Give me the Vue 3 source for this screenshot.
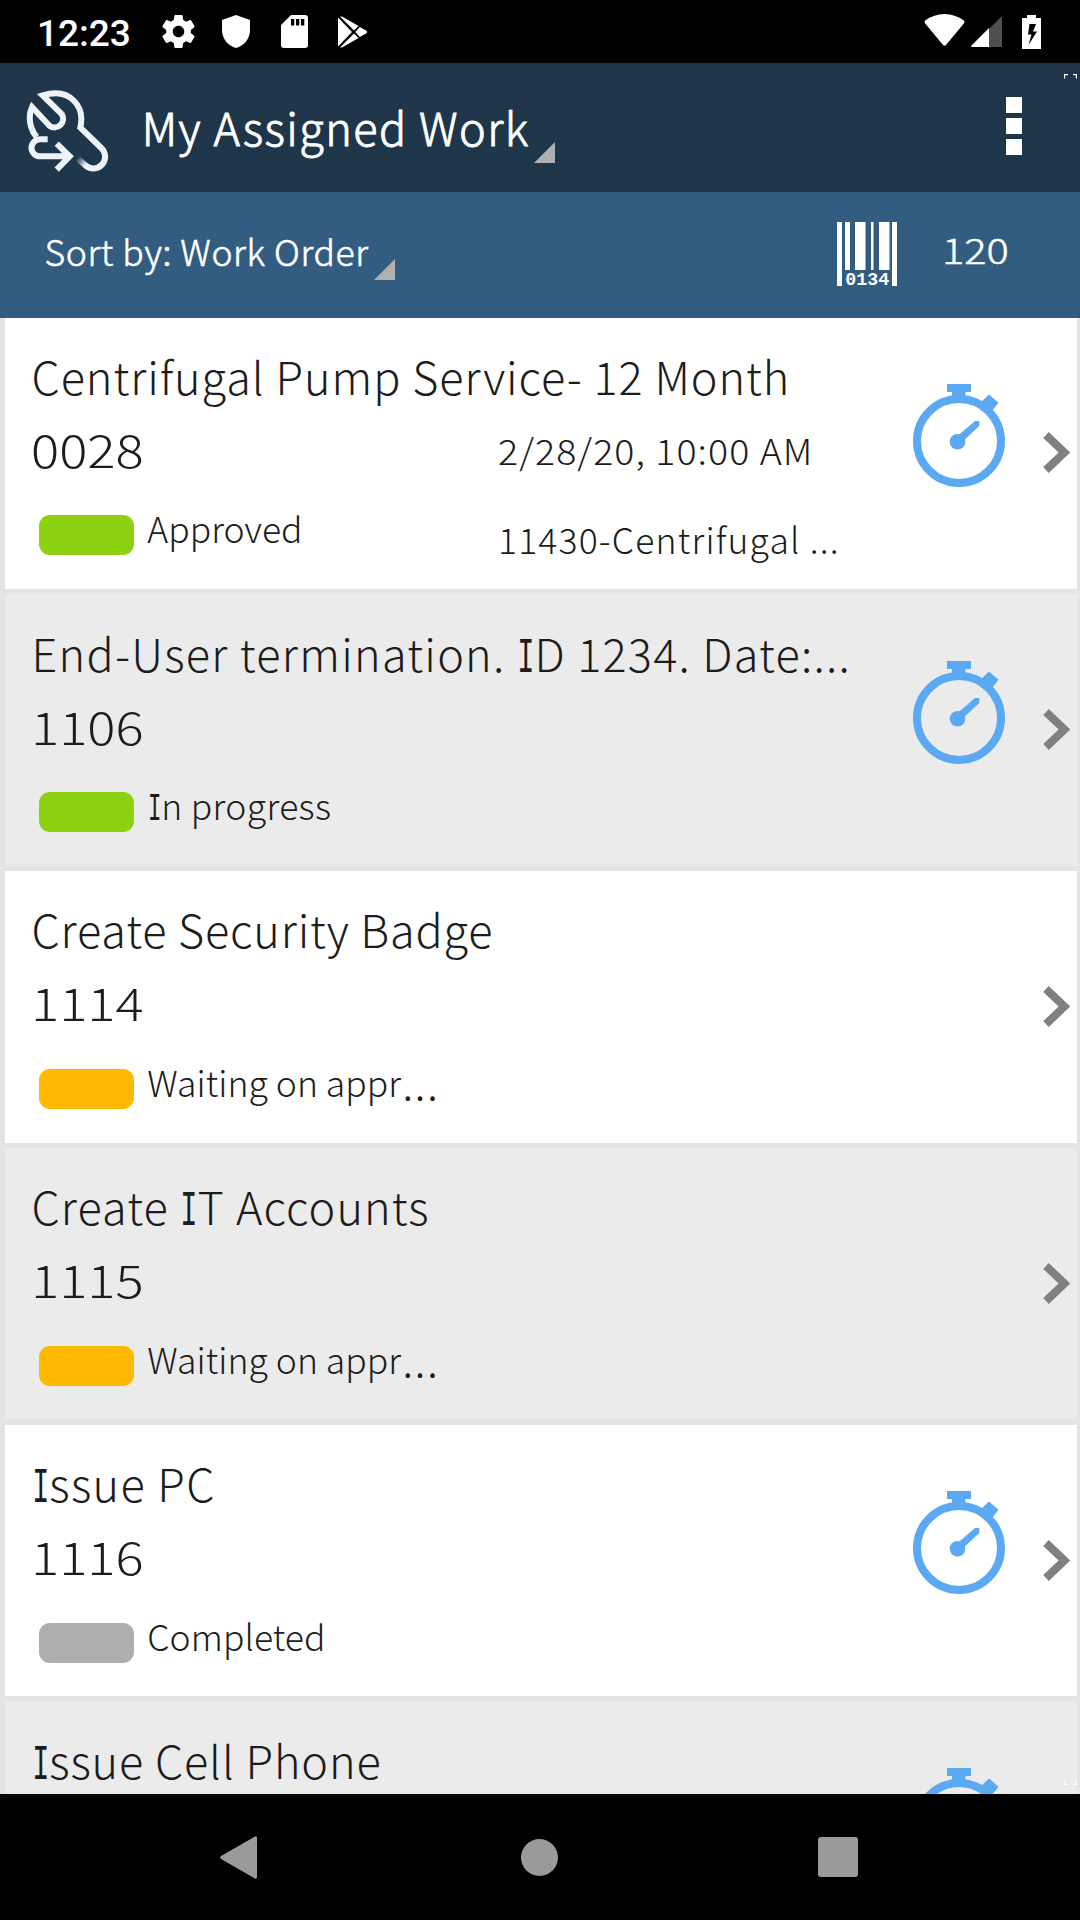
<script setup>
const orders = [
  { title: 'Centrifugal Pump Service- 12 Month', ls: 0.94, id: '0028', status: 'Approved', sls: 0, tone: 'green', timer: true, date: '2/28/20, 10:00 AM', asset: '11430-Centrifugal ...' },
  { title: 'End-User termination. ID 1234. Date:...', ls: 1.26, id: '1106', status: 'In progress', sls: 0.35, tone: 'green', timer: true },
  { title: 'Create Security Badge', ls: 0.83, id: '1114', status: 'Waiting on appr', cut: true, sls: 0.05, tone: 'amber' },
  { title: 'Create IT Accounts', ls: 1.08, id: '1115', status: 'Waiting on appr', cut: true, sls: 0.05, tone: 'amber' },
  { title: 'Issue PC', ls: 1.35, id: '1116', status: 'Completed', sls: 0.05, tone: 'gray', timer: true },
  { title: 'Issue Cell Phone', ls: 0.87, timer: true }
]
// Capital I is set in a slab face, so it is split from the rest of the text.
const parts = (text) => text.split(/(I)/).filter(Boolean)
</script>

<template>
  <div class="screen">
    <div class="status-bar">
      <span class="clock">12:23</span>
      <svg class="gear" viewBox="2 2 20 20"><path fill="#fff" d="M19.43 12.98c.04-.32.07-.64.07-.98s-.03-.66-.07-.98l2.11-1.65c.19-.15.24-.42.12-.64l-2-3.46c-.12-.22-.39-.3-.61-.22l-2.49 1c-.52-.4-1.08-.73-1.69-.98l-.38-2.65C14.46 2.18 14.25 2 14 2h-4c-.25 0-.46.18-.49.42l-.38 2.65c-.61.25-1.17.59-1.69.98l-2.49-1c-.23-.09-.49 0-.61.22l-2 3.46c-.13.22-.07.49.12.64l2.11 1.65c-.04.32-.07.65-.07.98s.03.66.07.98l-2.11 1.65c-.19.15-.24.42-.12.64l2 3.46c.12.22.39.3.61.22l2.49-1c.52.4 1.08.73 1.69.98l.38 2.65c.03.24.24.42.49.42h4c.25 0 .46-.18.49-.42l.38-2.65c.61-.25 1.17-.59 1.69-.98l2.49 1c.23.09.49 0 .61-.22l2-3.46c.12-.22.07-.49-.12-.64l-2.11-1.65zM12 15.5c-1.93 0-3.5-1.57-3.5-3.5s1.57-3.5 3.5-3.5 3.5 1.57 3.5 3.5-1.57 3.5-3.5 3.5z" /></svg>
      <svg class="shield" viewBox="0 0 28 33"><path fill="#fff" d="M14 0L28 5V15C28 24 22 31 14 33C6 31 0 24 0 15V5Z" /></svg>
      <svg class="sd" viewBox="0 0 27 33"><path fill="#fff" fill-rule="evenodd" d="M10 0H24Q27 0 27 3V30Q27 33 24 33H3Q0 33 0 30V10ZM10 4V10.500H13.300V4ZM15 4V10.500H18.300V4ZM20 4V10.500H23.300V4Z" /></svg>
      <svg class="play" viewBox="0 0 30 32"><g fill="#fff"><path d="M0 1.500L14 16L0 30.500Z" /><path d="M2 .5L4.500 .8L20.500 10L16 14.500Z" /><path d="M2 31.500L4.500 31.200L20.500 22L16 17.500Z" /><path d="M21.800 11L28.500 14.700Q30 16 28.500 17.300L21.800 21L17.300 16Z" /></g></svg>
      <div class="grow"></div>
      <svg class="wifi" viewBox="0 0 41 32"><path fill="#fff" d="M1.200 6.500Q0 8 1 9.200L19 31Q20.500 32.500 22 31L40 9.200Q41 8 39.800 6.500Q31 0 20.500 0Q10 0 1.200 6.500Z" /></svg>
      <svg class="signal" viewBox="0 0 31 31"><path fill="#4f4f4f" d="M18 13L31 0V31H18Z" /><path fill="#fff" d="M0 30L18 12V31H1Q0 31 0 30Z" /></svg>
      <svg class="battery" viewBox="0 0 19 34"><path fill="#fff" fill-rule="evenodd" d="M5 0H14V3H19V34H0V3H5ZM7.500 9L6 19.500H9.500L6.500 30L15 16.500H11L14 9Z" /></svg>
    </div>

    <header class="app-bar">
      <svg class="logo" viewBox="80 262 252 256" fill="none" stroke="#eef3fa" stroke-width="18">
        <defs><linearGradient id="fade" gradientUnits="userSpaceOnUse" x1="234" y1="472" x2="258" y2="494"><stop offset="0" stop-color="#eef3fa" stop-opacity="0" /><stop offset="1" stop-color="#eef3fa" /></linearGradient></defs>
        <path d="M188 341L130 284Q150 278 170 278A76 76 0 0 1 246 354Q246 370 243 381L306 442A35 35 0 0 1 258 494" />
        <path stroke="url(#fade)" d="M259 495L234 472" />
        <path d="M187 340A26 26 0 0 1 151 376L98 319Q86 345 95 378Q100 395 112 409" />
        <path d="M145 416H122A25 25 0 0 0 122 467H210M172 429L211 467L172 507" />
      </svg>
      <h1 class="heading">My Assigned Work</h1>
      <svg class="caret" viewBox="0 0 21 21"><path fill="#b0b0b0" d="M21 0V21H0Z" /></svg>
      <div class="grow"></div>
      <div class="overflow"><i></i><i></i><i></i></div>
      <svg class="corner" viewBox="0 0 13 5"><path fill="none" stroke="#fff" stroke-width="1.200" d="M.6 4.500V.6H4M9 .6H12.400V4.500" /></svg>
    </header>

    <div class="sort-bar">
      <span class="sort-label">Sort by: Work Order</span>
      <svg class="caret sort-caret" viewBox="0 0 21 21"><path fill="#b0b0b0" d="M21 0V21H0Z" /></svg>
      <div class="grow"></div>
      <svg class="barcode" viewBox="0 0 60 64"><path fill="#fff" d="M0 0H5V64H0ZM8 0H13V48H8ZM18 0H28.500V48H18ZM34 0H36.500V48H34ZM42 0H52.500V48H42ZM55 0H60V64H55Z" /><text x="30.200" y="63" text-anchor="middle" textLength="44" lengthAdjust="spacingAndGlyphs">0134</text></svg>
      <span class="count"><span class="wide">120</span></span>
    </div>

    <main class="list">
      <article v-for="(order, n) in orders" :key="order.title" class="row" :class="{ alt: n % 2 }">
        <div class="info">
          <div class="title" :style="{ letterSpacing: order.ls + 'px' }"><span v-for="(p, k) in parts(order.title)" :key="k" :class="{ slab: p === 'I' }">{{ p }}</span></div>
          <div v-if="order.id" class="cols">
            <div class="left">
              <div class="id"><span class="wide">{{ order.id }}</span></div>
              <div class="state">
                <span class="pill" :class="order.tone"></span>
                <span class="state-text" :style="{ letterSpacing: order.sls + 'px' }"><span v-for="(p, k) in parts(order.status)" :key="k" :class="{ slab: p === 'I' }">{{ p }}</span></span>
                <span v-if="order.cut" class="dots">...</span>
              </div>
            </div>
            <div v-if="order.date" class="right">
              <div class="date">{{ order.date }}</div>
              <div class="asset">{{ order.asset }}</div>
            </div>
          </div>
        </div>
        <svg v-if="order.timer" class="timer" viewBox="0 0 92 103">
          <circle cx="46" cy="57" r="42" fill="none" stroke="#5aa9f2" stroke-width="8" />
          <path fill="#5aa9f2" d="M34 0H58V8H52.500V13H39V8H34ZM76 10.500L85.500 18.800L79 27L68 18Z" />
          <circle cx="44.500" cy="57.700" r="7.800" fill="#5aa9f2" />
          <path fill="#5aa9f2" d="M41 55L62 37H66.300V42L48 59Z" />
        </svg>
        <svg class="chevron" viewBox="0 0 27 41"><path fill="none" stroke="#808080" stroke-width="8" d="M3 3L21.500 20.500L3 38" /></svg>
      </article>
      <svg class="corner low" viewBox="0 0 13 5"><path fill="none" stroke="#fff" stroke-width="1.200" d="M.6 .5V4.400H4M9 4.400H12.400V.5" /></svg>
    </main>

    <nav class="nav-bar">
      <svg class="back" viewBox="0 0 37 43"><path fill="#9a9a9a" d="M35 .5Q37 -.5 37 2V41Q37 43.500 35 42.500L1 23Q-.5 21.500 1 20Z" /></svg>
      <span class="home"></span>
      <span class="recent"></span>
    </nav>
  </div>
</template>

<style>
body { margin: 0; background: #000; }
</style>

<style scoped>
.screen { width: 1080px; height: 1920px; overflow: hidden; display: flex; flex-direction: column; background: #000; color: #1c1c1c; font-family: "Noto Sans CJK JP", "Open Sans", sans-serif; font-weight: 300; }
.grow { flex: 1; }
svg { display: block; flex: none; }
.status-bar { height: 63px; flex: none; display: flex; align-items: center; background: #000; color: #fff; padding: 0 39px 0 37px; box-sizing: border-box; }
.clock { width: 125px; font: 500 37px/60px Roboto, sans-serif; margin-top: 4px; }
.gear { width: 33px; height: 33px; margin-right: 27px; }
.shield { width: 28px; height: 33px; margin-right: 31px; }
.sd { width: 27px; height: 33px; margin-right: 30px; }
.play { width: 30px; height: 32px; }
.wifi { width: 41px; height: 32px; margin: 0 6px 3px 0; }
.signal { width: 31px; height: 31px; margin-right: 20px; }
.battery { width: 19px; height: 34px; }
.app-bar { height: 129px; flex: none; display: flex; background: linear-gradient(#203549, #1e374b); color: #fff; position: relative; }
.logo { width: 84px; height: 85.300px; margin: 25px 0 0 26.300px; }
.heading { margin: 0 0 0 31.400px; font-size: 45px; font-weight: 300; line-height: 127px; letter-spacing: 1.450px; white-space: nowrap; width: 391px; -webkit-text-stroke: .9px #fff; }
.caret { width: 21px; height: 21px; margin: 79px 0 0 1px; }
.overflow { display: flex; flex-direction: column; gap: 5px; margin: 34px 58px 0 0; }
.overflow i { width: 16px; height: 16px; background: #fff; }
.corner { position: absolute; right: 3px; top: 11px; width: 13px; height: 5px; }
.corner.low { top: auto; bottom: 9px; }
.sort-bar { height: 126px; margin-bottom: -.6px; position: relative; z-index: 1; flex: none; display: flex; background: #325d80; color: #fff; }
.sort-label { margin-left: 44.500px; width: 328.500px; font-size: 35.500px; line-height: 117px; letter-spacing: .620px; white-space: nowrap; -webkit-text-stroke: .6px #fff; }
.sort-caret { margin-top: 67px; }
.barcode { width: 60px; height: 64px; margin: 30px 45px 0 0; overflow: visible; }
.barcode text { fill: #fff; font: 700 18.500px "Liberation Mono", monospace; }
.count { width: 138px; font-size: 35.500px; line-height: 113px; -webkit-text-stroke: .5px #fff; }
.wide { display: inline-block; transform: scaleX(1.170); transform-origin: left; }
.list { flex: 1; min-height: 0; overflow: hidden; background: #e4e4e4; padding: 0 3px 0 5px; position: relative; }
.row { height: 271.600px; margin-bottom: 5.200px; background: #fff; display: flex; }
.row.alt { background: #ebebeb; }
.info { width: 908px; padding: 21.400px 0 0 26.500px; box-sizing: border-box; white-space: pre; }
.title, .id { font-size: 45px; line-height: 73px; }
.id { margin-left: -.5px; }
.slab { display: inline-block; font-family: "Liberation Mono", monospace; font-size: 1.090em; line-height: 1; font-weight: 400; letter-spacing: 0; transform: scaleX(.580); margin: 0 -.120em; }
.cols { display: flex; }
.left { width: 466.500px; }
.state { display: flex; margin: 6.600px 0 0 7.500px; }
.pill { width: 95px; height: 40px; border-radius: 11px; margin-top: 24px; }
.green { background: #8cd211; }
.amber { background: #ffb900; }
.gray { background: #aeaeae; }
.state-text { margin-left: 13.300px; font-size: 35.500px; line-height: 73px; }
.dots { font-size: 44px; line-height: 73px; margin-left: 1px; letter-spacing: 1.400px; }
.date, .asset { font-size: 35.500px; line-height: 73px; }
.date { margin-top: 1px; letter-spacing: 1px; transform: scaleX(1.058); transform-origin: left; }
.asset { margin-top: 16px; letter-spacing: 1.180px; }
.timer { width: 92px; height: 103px; margin-top: 66.600px; }
.chevron { width: 27px; height: 41px; margin: 115px 7px 0 auto; }
.nav-bar { height: 126px; flex: none; display: flex; align-items: center; background: #000; }
.back { width: 37px; height: 43px; margin-left: 220px; }
.home { width: 37px; height: 37px; border-radius: 50%; background: #9a9a9a; margin-left: 264px; }
.recent { width: 40px; height: 40px; border-radius: 3px; background: #9a9a9a; margin-left: 260px; }
</style>
